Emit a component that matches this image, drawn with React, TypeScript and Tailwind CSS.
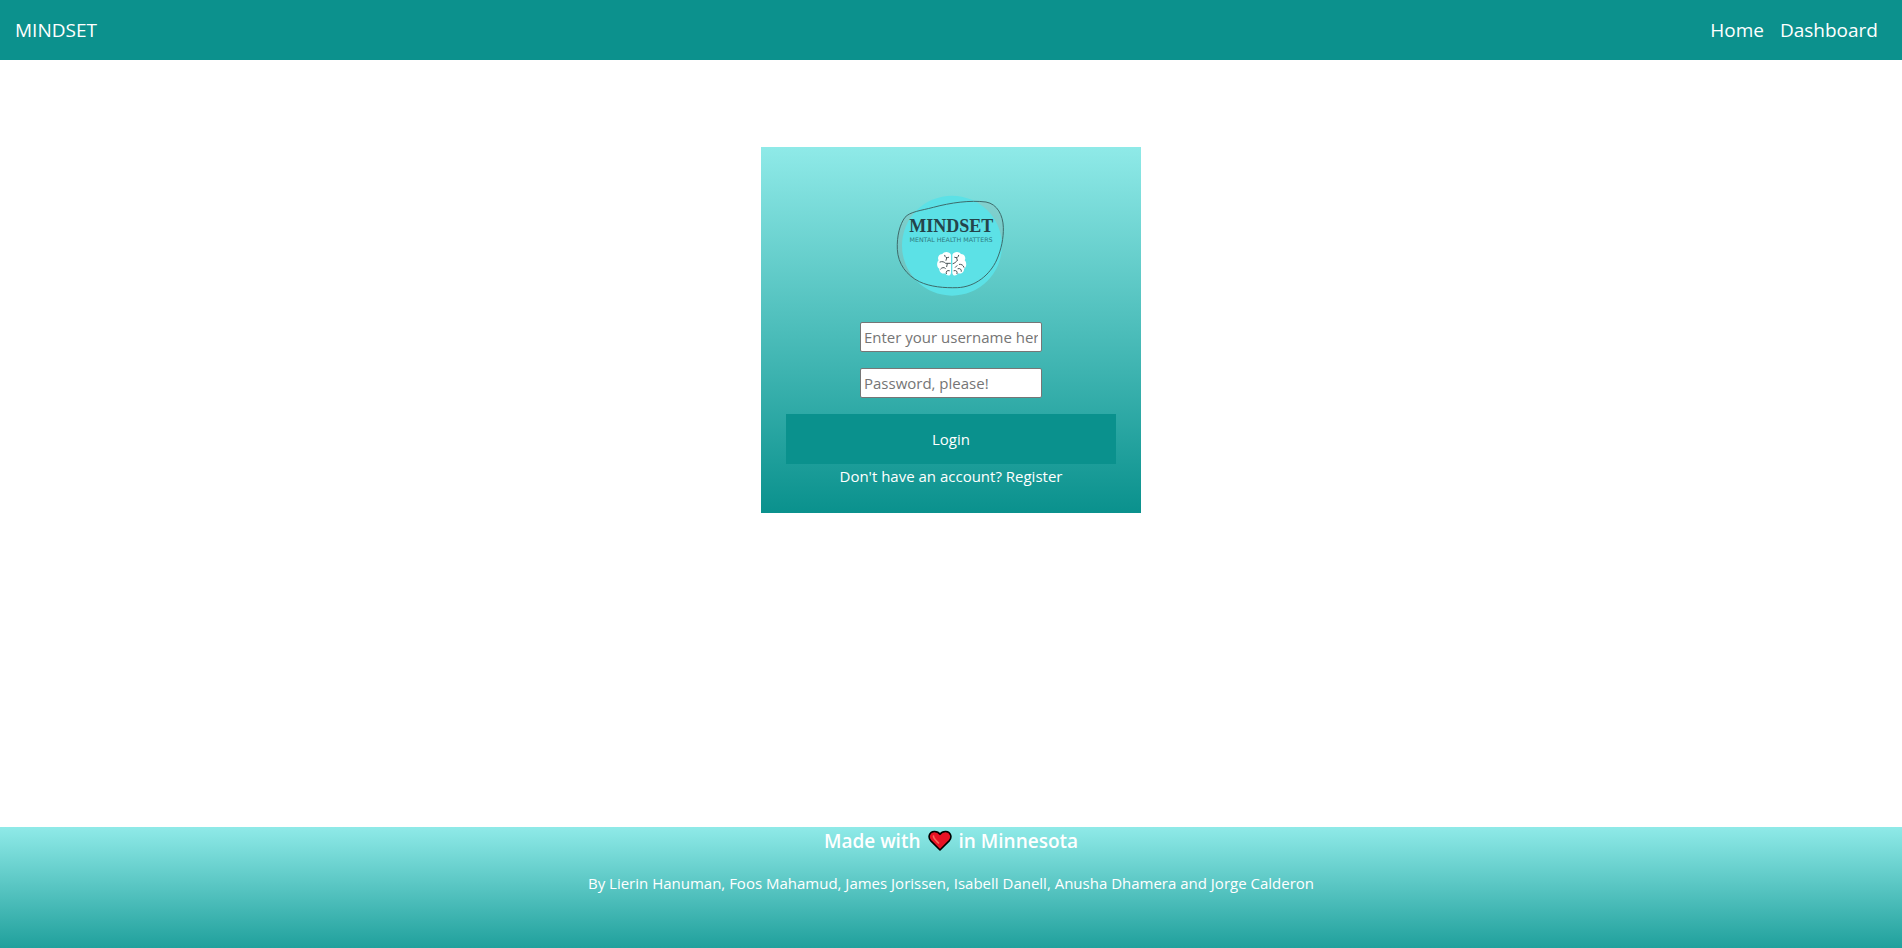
import React from "react";

const outline =
  "M75 112 C60 132 50 168 52 208 C54 252 80 286 118 305 C152 321 192 324 232 323 C286 321 330 284 350 240 C364 208 371 174 370 142 C369 106 352 72 318 66 C270 60 212 68 160 82 C122 92 90 95 75 112 Z";

function Logo() {
  return (
    <svg viewBox="33 30 360 330" className="mx-auto h-[110px] w-[120px]" role="img" aria-label="Mindset, mental health matters">
      <path d={outline} fill="#8fb5b2" fillOpacity="0.3" />
      <circle cx="216" cy="197" r="150" fill="#5ce1e6" />
      <path d={outline} fill="none" stroke="#3d6b6b" strokeWidth="3" />
      <text x="214" y="156" textAnchor="middle" fontSize="54" fontWeight="700" fill="#24444a" className="font-['Liberation_Serif',serif]">
        MINDSET
      </text>
      <text x="213" y="187" textAnchor="middle" fontSize="19" fill="#2f7a80" className="font-['DejaVu_Sans',sans-serif]">
        MENTAL HEALTH MATTERS
      </text>
      <g fill="#ffffff">
        <path d="M213 224 C209 214 192 213 187 222 C176 222 171 234 176 241 C169 248 170 262 178 266 C177 277 188 283 196 280 C201 290 212 288 213 279 Z" />
        <path d="M217 224 C221 214 238 213 243 222 C254 222 259 234 254 241 C261 248 260 262 252 266 C253 277 242 283 234 280 C229 290 218 288 217 279 Z" />
      </g>
      <g fill="none" stroke="#4a5558" strokeWidth="3" strokeLinecap="round" strokeLinejoin="round">
        <path d="M194 226 C195 232 199 235 206 232 M200 234 L198 241 M180 246 C187 243 193 246 197 250 H211 M202 251 L200 260 M182 267 C186 262 192 261 196 265 M199 281 C197 274 201 270 208 272" />
        <path d="M236 226 C235 232 231 235 224 232 M230 234 L232 241 M219 251 C224 249 228 247 231 242 M252 262 C250 255 244 252 238 253 M226 262 L231 257 M244 274 C245 268 240 264 234 266 M231 281 C233 274 229 270 222 272" />
      </g>
    </svg>
  );
}

function Heart() {
  return (
    <svg viewBox="0 0 24 22" className="h-[22px] w-6" role="img" aria-label="love">
      <path d="M12 20 L2.6 10.6 C-0.4 7 1.4 1.6 6.2 1.5 C8.8 1.4 11 2.8 12 4.4 C13 2.8 15.2 1.4 17.8 1.5 C22.6 1.6 24.4 7 21.4 10.6 Z" fill="#e81224" stroke="#000000" strokeWidth="1.6" strokeLinejoin="round" />
      <path d="M5.5 6.2 C5.3 8.3 6.6 9.3 10.5 13" fill="none" stroke="#f4685a" strokeWidth="1.7" strokeLinecap="round" />
    </svg>
  );
}

const inputClass =
  "h-[30px] w-[182px] rounded-xs border border-[#767676] bg-white px-[3px] text-[15px] text-black placeholder:text-[#757575]";

export default function App() {
  return (
    <div className="flex min-h-screen flex-col bg-white font-['Open_Sans','Noto_Sans',sans-serif] text-[15px] leading-6 text-white">
      <header className="flex h-15 items-center justify-between bg-[#0c918d] pr-6 pl-[15px] text-[19px]">
        <a href="#">MINDSET</a>
        <nav className="flex gap-4">
          <a href="#home">Home</a>
          <a href="#dashboard">Dashboard</a>
        </nav>
      </header>

      <main className="flex-1 py-[87px]">
        <form
          onSubmit={(event) => event.preventDefault()}
          className="mx-auto flex w-1/5 min-w-[280px] flex-col items-center bg-linear-to-b/srgb from-[#8feae8] to-[#0a918d] px-[25px] pt-[43px] pb-[25px]"
        >
          <Logo />
          <div className="mt-[22px] mb-4 flex flex-col gap-4">
            <input type="text" aria-label="Username" placeholder="Enter your username here" className={inputClass} />
            <input type="password" aria-label="Password" placeholder="Password, please!" className={inputClass} />
          </div>
          <button type="submit" className="h-[50px] w-full bg-[#0a918d]">
            Login
          </button>
          <p>
            Don't have an account? <a href="#register">Register</a>
          </p>
        </form>
      </main>

      <footer className="h-[121px] bg-linear-to-b/srgb from-[#8feae8] to-[#20a09c] text-center">
        <h2 className="flex items-center justify-center gap-[7px] text-[19px] leading-7 font-semibold">
          Made with <Heart /> in Minnesota
        </h2>
        <p className="mt-4">
          By Lierin Hanuman, Foos Mahamud, James Jorissen, Isabell Danell, Anusha Dhamera and Jorge Calderon
        </p>
      </footer>
    </div>
  );
}
